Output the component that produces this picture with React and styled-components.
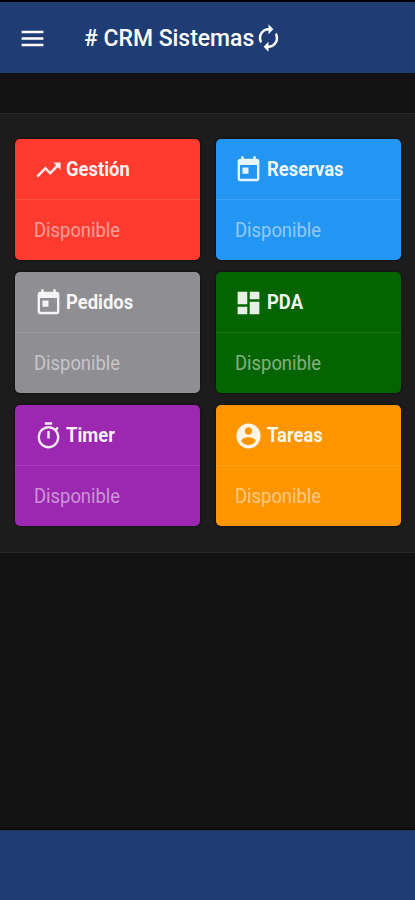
import React from 'react'
import styled, { createGlobalStyle } from 'styled-components'
import { MdMenu, MdAutorenew, MdTrendingUp, MdDashboard } from 'react-icons/md'

const iconProps = {
    viewBox: '0 0 24 24',
    fill: 'currentColor',
    preserveAspectRatio: 'none',
}

const TodayIcon = () => (
    <svg {...iconProps}>
        <path d="M19 3h-1V1h-2v2H8V1H6v2H5c-1.11 0-1.99.9-1.99 2L3 19c0 1.1.89 2 2 2h14c1.1 0 2-.9 2-2V5c0-1.1-.9-2-2-2zm0 16H5V8h14v11zM7 10h5v5H7z" />
    </svg>
)

const TimerIcon = () => (
    <svg {...iconProps}>
        <path d="M15 1H9v2h6V1zm-4 13h2V8h-2v6zm8.03-6.61l1.42-1.42c-.43-.51-.9-.99-1.41-1.41l-1.42 1.42C16.07 4.74 14.12 4 12 4c-4.97 0-9 4.03-9 9s4.02 9 9 9 9-4.03 9-9c0-2.12-.74-4.07-1.97-5.61zM12 20c-3.87 0-7-3.13-7-7s3.13-7 7-7 7 3.13 7 7-3.13 7-7 7z" />
    </svg>
)

const AccountIcon = () => (
    <svg {...iconProps}>
        <path d="M12 2C6.48 2 2 6.48 2 12s4.48 10 10 10 10-4.48 10-10S17.52 2 12 2zm0 3c1.66 0 3 1.34 3 3s-1.34 3-3 3-3-1.34-3-3 1.34-3 3-3zm0 14.2c-2.5 0-4.71-1.28-6-3.22.03-1.99 4-3.08 6-3.08 1.99 0 5.97 1.09 6 3.08-1.29 1.94-3.5 3.22-6 3.22z" />
    </svg>
)

const modules = [
    { name: 'Gestión', icon: MdTrendingUp, color: '#ff3b30' },
    { name: 'Reservas', icon: TodayIcon, color: '#2396f3' },
    { name: 'Pedidos', icon: TodayIcon, color: '#8e8e93' },
    { name: 'PDA', icon: MdDashboard, color: '#046500' },
    { name: 'Timer', icon: TimerIcon, color: '#9c27b0' },
    { name: 'Tareas', icon: AccountIcon, color: '#ff9500' },
]

export default function App() {
    return (
        <>
            <GlobalStyle />
            <Screen>
                <Navbar>
                    <MenuButton aria-label="Menu">
                        <MdMenu preserveAspectRatio="none" />
                    </MenuButton>
                    <Title># CRM Sistemas</Title>
                    <RefreshButton aria-label="Recargar">
                        <MdAutorenew preserveAspectRatio="none" />
                    </RefreshButton>
                </Navbar>
                <Block>
                    {modules.map(({ name, icon: Icon, color }) => (
                        <Card key={name} $color={color}>
                            <CardHeader>
                                <Icon preserveAspectRatio="none" />
                                <CardTitle>{name}</CardTitle>
                            </CardHeader>
                            <CardContent>
                                <Status>Disponible</Status>
                            </CardContent>
                        </Card>
                    ))}
                </Block>
                <Toolbar />
            </Screen>
        </>
    )
}

const GlobalStyle = createGlobalStyle`
    * {
        box-sizing: border-box;
    }
    body {
        margin: 0;
        background: #121212;
        font-family: Roboto, sans-serif;
    }
`

const Screen = styled.div`
    display: flex;
    flex-direction: column;
    width: 415px;
    height: 900px;
    overflow: hidden;
    background: #121212;
    border-top: 2px solid #000;
    color: #fff;
`

const Navbar = styled.header`
    display: flex;
    align-items: center;
    flex: none;
    height: 71px;
    padding: 1px 0 0 18px;
    background: #1f3d74;
`

const IconButton = styled.button`
    display: block;
    flex: none;
    padding: 0;
    border: 0;
    background: none;
    color: #fff;
    svg {
        display: block;
        width: 100%;
        height: 100%;
    }
`

const MenuButton = styled(IconButton)`
    width: 29px;
    height: 31px;
`

const RefreshButton = styled(IconButton)`
    width: 29px;
    height: 30px;
    margin-bottom: 1px;
`

const Title = styled.h1`
    flex: none;
    width: 170px;
    margin: 0 0 0 37px;
    font-size: 24px;
    font-weight: 500;
    line-height: 30px;
    white-space: nowrap;
    transform: scaleX(0.955);
    transform-origin: left center;
`

const Block = styled.main`
    display: grid;
    flex: none;
    grid-template-columns: 185px 185px;
    grid-auto-rows: 121px;
    gap: 12px 15.5px;
    height: 440px;
    margin-top: 40px;
    padding: 25px 0 0 15px;
    background: #1c1c1d;
    border-top: 1px solid #282829;
    border-bottom: 1px solid #282829;
`

const Card = styled.section`
    border-radius: 5px;
    overflow: hidden;
    background: ${({ $color }) => $color};
    box-shadow: 0 0 3px rgba(0, 0, 0, 0.7);
`

const CardHeader = styled.div`
    display: flex;
    align-items: center;
    height: 61px;
    padding-left: 18.5px;
    border-bottom: 1px solid rgba(255, 255, 255, 0.1);
    svg {
        flex: none;
        width: 29px;
        height: 30px;
        margin-top: 2px;
        color: rgba(255, 255, 255, 0.9);
    }
`

const CardTitle = styled.h2`
    margin: 0 0 0 3.5px;
    font-size: 20px;
    font-weight: 700;
    line-height: 26px;
    color: rgba(255, 255, 255, 0.95);
    transform: scaleX(0.92);
    transform-origin: left center;
`

const CardContent = styled.div`
    display: flex;
    align-items: center;
    height: 60px;
    padding-left: 19px;
`

const Status = styled.span`
    font-size: 20px;
    line-height: 26px;
    color: rgba(255, 255, 255, 0.5);
    transform: scaleX(0.92);
    transform-origin: left center;
`

const Toolbar = styled.footer`
    flex: none;
    height: 70px;
    margin-top: auto;
    background: #1f3d74;
    border-top: 1px solid #1b3a5c;
    box-shadow: 0 -1px 1px #000;
`
